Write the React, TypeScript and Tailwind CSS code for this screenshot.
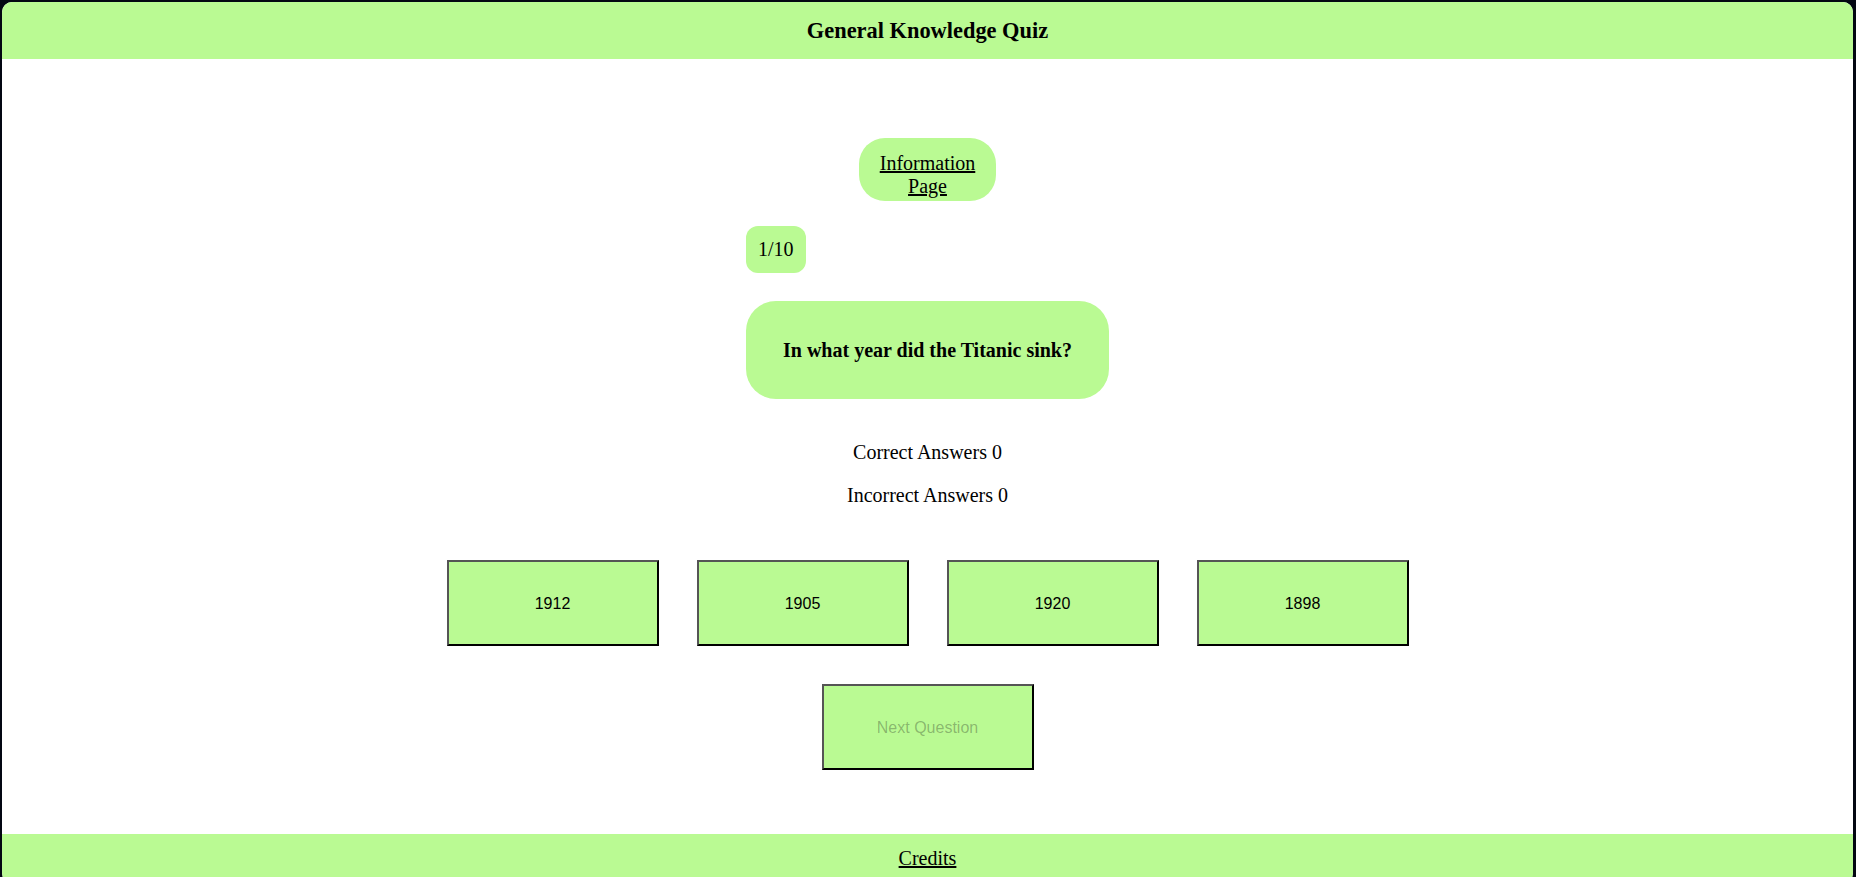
const answers = ["1912", "1905", "1920", "1898"];

function AnswerButton({ label, disabled }: { label: string; disabled?: boolean }) {
  return (
    <button
      type="button"
      disabled={disabled}
      className={
        "flex h-[86px] w-[212px] items-center justify-center border-2 border-t-[#555] border-l-[#555] border-r-black border-b-black bg-[#bafa93] font-['Liberation_Sans',Arial,sans-serif] text-[16px] " +
        (disabled ? "text-[rgba(16,16,16,0.3)]" : "text-black")
      }
    >
      {label}
    </button>
  );
}

export default function App() {
  return (
    <div className="min-h-screen bg-[#030712] pt-[2px] pr-[3px] pl-[2px] font-['Liberation_Serif','Times_New_Roman',serif] text-[20px] leading-[23px] text-black">
      <div className="overflow-hidden rounded-[10px] bg-white">
        <header className="flex h-[57px] items-center justify-center bg-[#bafa93]">
          <h1 className="text-[22.4px] font-bold">General Knowledge Quiz</h1>
        </header>

        <main className="flex flex-col items-center pt-[79px] pb-[64px]">
          <a
            href="#"
            className="w-[137px] rounded-[26px] bg-[#bafa93] pt-[14px] pb-[3px] text-center underline"
          >
            Information Page
          </a>

          <div className="mt-[25px] flex w-[363px] flex-col items-start">
            <div className="rounded-xl bg-[#bafa93] p-3">1/10</div>
            <div className="mt-[28px] flex h-[98px] w-[363px] items-center justify-center rounded-[30px] bg-[#bafa93]">
              <h3 className="font-bold">In what year did the Titanic sink?</h3>
            </div>
          </div>

          <p className="mt-[42px]">Correct Answers 0</p>
          <p className="mt-[20px]">Incorrect Answers 0</p>

          <div className="mt-[53px] flex gap-[38px]">
            {answers.map((a) => (
              <AnswerButton key={a} label={a} />
            ))}
          </div>

          <div className="mt-[38px]">
            <AnswerButton label="Next Question" disabled />
          </div>
        </main>

        <footer className="bg-[#bafa93] py-[13px] text-center">
          <a href="#" className="underline">
            Credits
          </a>
        </footer>
      </div>
    </div>
  );
}
